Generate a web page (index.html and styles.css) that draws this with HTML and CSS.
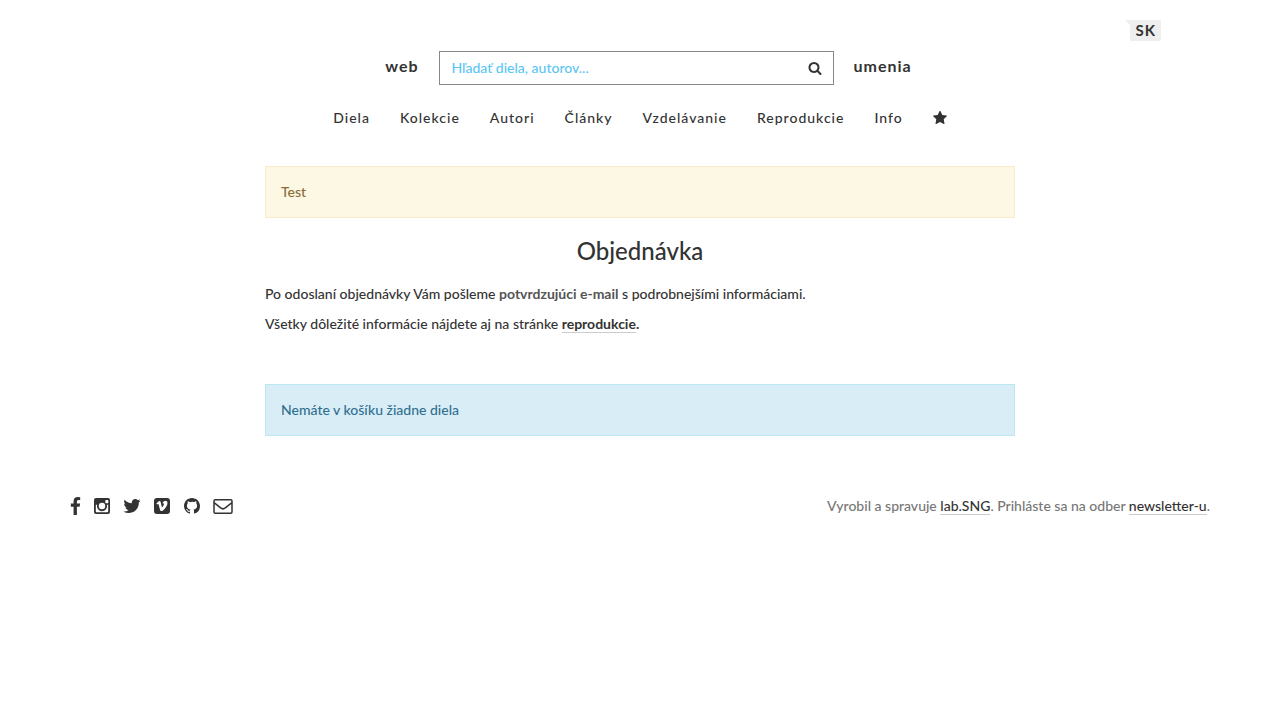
FILE: index.html
```html
<!DOCTYPE html>
<html lang="sk">
<head>
<meta charset="utf-8">
<meta name="viewport" content="width=device-width, initial-scale=1">
<title>Objednávka | web umenia</title>
<link rel="stylesheet" href="styles.css">
</head>
<body>
<header class="header">
  <div class="languages"><a class="lang" href="#">SK</a></div>
  <form class="search-row" role="search">
    <a class="brand brand-left" href="#">web</a>
    <div class="search">
      <input class="search-input" type="text" aria-label="Hľadať" placeholder="Hľadať diela, autorov...">
      <button class="search-button" type="button" aria-label="Hľadať">
        <svg class="search-icon" viewBox="0 0 1792 1792" aria-hidden="true"><path d="M1216 832q0-185-131.500-316.500t-316.500-131.500-316.500 131.500-131.500 316.500 131.500 316.500 316.500 131.500 316.500-131.500 131.500-316.500zm512 832q0 52-38 90t-90 38q-54 0-90-38l-343-342q-179 124-399 124-143 0-273.500-55.500t-225-150-150-225-55.500-273.500 55.500-273.500 150-225 225-150 273.500-55.500 273.500 55.500 225 150 150 225 55.500 273.500q0 220-124 399l343 343q37 37 37 90z"/></svg>
      </button>
    </div>
    <a class="brand" href="#">umenia</a>
  </form>
  <nav class="nav">
    <a href="#">Diela</a>
    <a href="#">Kolekcie</a>
    <a href="#">Autori</a>
    <a href="#">Články</a>
    <a href="#">Vzdelávanie</a>
    <a href="#">Reprodukcie</a>
    <a href="#">Info</a>
    <a class="nav-star" href="#" aria-label="Obľúbené"><svg class="star-icon" viewBox="64 64 1664 1664" aria-hidden="true"><path d="M1728 647q0 22-26 48l-363 354 86 500q1 7 1 20 0 21-10.500 35.500t-30.500 14.500q-19 0-40-12l-449-236-449 236q-22 12-40 12-21 0-31.500-14.500t-10.500-35.500q0-6 2-20l86-500-364-354q-25-27-25-48 0-37 56-46l502-73 225-455q19-41 49-41t49 41l225 455 502 73q56 9 56 46z"/></svg></a>
  </nav>
</header>
<main class="content">
  <div class="alert alert-warning">Test</div>
  <h1 class="title">Objednávka</h1>
  <p class="text">Po odoslaní objednávky Vám pošleme <strong class="muted">potvrdzujúci e-mail</strong> s podrobnejšími informáciami.</p>
  <p class="text">Všetky dôležité informácie nájdete aj na stránke <strong><a class="underline" href="#">reprodukcie</a>.</strong></p>
  <div class="alert alert-info">Nemáte v košíku žiadne diela</div>
</main>
<footer class="footer">
  <div class="social">
    <a href="#" aria-label="Facebook"><svg class="icon icon-narrow" viewBox="479 0 864 1664" aria-hidden="true"><path d="M1343 12v264h-157q-86 0-116 36t-30 108v189h293l-39 296h-254v759h-306v-759h-255v-296h255v-218q0-186 104-288.500t277-102.500q147 0 228 12z"/></svg></a>
    <a href="#" aria-label="Instagram"><svg class="icon" viewBox="0 0 18 18" aria-hidden="true"><path fill-rule="evenodd" d="M3 1H15Q17 1 17 3V15Q17 17 15 17H3Q1 17 1 15V3Q1 1 3 1ZM13 3Q12.300 3 12.300 3.700V5.500Q12.300 6.200 13 6.200H14.700Q15.400 6.200 15.400 5.500V3.700Q15.400 3 14.700 3ZM2.800 7.800V14.500Q2.800 15.200 3.500 15.200H14.500Q15.200 15.200 15.200 14.500V7.800H13.800A5 5 0 1 1 4.200 7.800ZM9 5.800A3.200 3.200 0 1 0 9 12.200A3.200 3.200 0 1 0 9 5.800Z"/></svg></a>
    <a href="#" aria-label="Twitter"><svg class="icon" viewBox="68 128 1656 1536" aria-hidden="true"><path d="M1684 408q-67 98-162 167 1 14 1 42 0 130-38 259.500t-115.500 248.500-184.500 210.500-258 146-323 54.500q-271 0-496-145 35 4 78 4 225 0 401-138-105-2-188-64.500t-114-159.500q33 5 61 5 43 0 85-11-112-23-185.500-111.500t-73.500-205.500v-4q68 38 146 41-66-44-105-115t-39-154q0-88 44-163 121 149 294.500 238.500t371.500 99.500q-8-38-8-74 0-134 94.500-228.500t228.500-94.500q140 0 236 102 109-21 205-78-37 115-142 178 93-10 186-50z"/></svg></a>
    <a href="#" aria-label="Vimeo"><svg class="icon" viewBox="0 0 18 18" aria-hidden="true"><path fill-rule="evenodd" d="M4 1H14Q17 1 17 4V14Q17 17 14 17H4Q1 17 1 14V4Q1 1 4 1ZM3.400 6.600L4 7.400Q5 6.700 5.300 7.100C6 8 6.500 11.300 7.100 12.900Q7.800 14.600 9.200 13.900Q11.100 12.900 12.900 10.200Q14.500 7.600 14.500 5.900Q14.500 3.700 12.500 3.700Q10.100 3.700 9.400 6.500Q11 6 10.900 7.200Q10.700 8.400 9.500 9.900Q8.900 10.500 8.600 9.300L7.800 5.400Q7.500 4 6.400 4Q5.400 4 3.400 6.600Z"/></svg></a>
    <a href="#" aria-label="GitHub"><svg class="icon" viewBox="-1 -1 18 18" aria-hidden="true"><path d="M8 0C3.580 0 0 3.580 0 8c0 3.540 2.290 6.530 5.470 7.590.4.070.55-.17.55-.38 0-.19-.01-.82-.01-1.490-2.010.37-2.530-.49-2.690-.94-.09-.23-.48-.94-.82-1.130-.28-.15-.68-.52-.01-.53.63-.01 1.080.58 1.230.82.72 1.210 1.870.87 2.330.66.07-.52.28-.87.51-1.070-1.780-.2-3.640-.89-3.640-3.950 0-.87.31-1.590.82-2.150-.08-.2-.36-1.020.08-2.120 0 0 .67-.21 2.200.82A7.600 7.600 0 0 1 8 3.860c.68 0 1.360.09 2 .27 1.530-1.040 2.200-.82 2.200-.82.44 1.100.16 1.920.08 2.120.51.56.82 1.270.82 2.150 0 3.070-1.870 3.750-3.650 3.950.29.25.54.73.54 1.480 0 1.070-.01 1.930-.01 2.200 0 .21.15.46.55.38A8 8 0 0 0 16 8c0-4.420-3.580-8-8-8z"/></svg></a>
    <a href="#" aria-label="E-mail"><svg class="icon icon-wide" viewBox="0 0 20 18" aria-hidden="true"><path fill="none" stroke="currentColor" stroke-width="1.500" stroke-linejoin="round" d="M2.200 2.700H17.800Q19 2.700 19 3.900V15.100Q19 16.300 17.800 16.300H2.200Q1 16.300 1 15.100V3.900Q1 2.700 2.200 2.700ZM1 5Q1.500 6 3 7.200L7.600 10.800Q10 12.900 12.400 10.800L17 7.200Q18.500 6 19 5"/></svg></a>
  </div>
  <p class="credits">Vyrobil a spravuje <a class="underline" href="#">lab.SNG</a>. Prihláste sa na odber <a class="underline" href="#">newsletter-u</a>.</p>
</footer>
</body>
</html>
```
FILE: styles.css
```css
* { box-sizing: border-box; }
body {
  margin: 0;
  background: #fff;
  color: #333;
  font: 500 14px/20px Lato, "Noto Sans", sans-serif;
}
a { color: #333; text-decoration: none; }
svg { display: block; fill: currentColor; }

.header { padding-top: 20px; }
.languages {
  display: flex;
  justify-content: flex-end;
  max-width: 1042px;
  margin: 0 auto;
}
.lang {
  position: relative;
  padding: 0 5px;
  border-radius: 0 2px 2px 0;
  background: #eee;
  font-size: 15px;
  font-weight: 700;
  line-height: 21px;
  letter-spacing: 1px;
}
.lang::before {
  content: "";
  position: absolute;
  top: 0;
  right: 100%;
  border-top: 5px solid #eee;
  border-left: 5px solid transparent;
}
.search-row {
  display: grid;
  grid-template-columns: 1fr 395px 1fr;
  gap: 20px;
  max-width: 1140px;
  margin: 10px auto 0;
  padding-right: 8px;
}
.brand {
  font-size: 16px;
  font-weight: 700;
  line-height: 30px;
  letter-spacing: 1px;
}
.brand-left { text-align: right; }
.search {
  display: flex;
  align-items: center;
  height: 34px;
  border: 1px solid #888;
}
.search-input {
  flex: 1;
  min-width: 0;
  padding: 0 12px;
  border: 0;
  outline: 0;
  background: none;
  color: #333;
  font: inherit;
}
.search-input::placeholder { color: #5bc6f2; opacity: 1; }
.search-button {
  padding: 0 11px;
  border: 0;
  background: none;
  color: #333;
}
.search-icon { width: 14px; height: 14px; }
.nav {
  display: flex;
  justify-content: center;
  gap: 30px;
  padding-top: 23px;
  letter-spacing: 1px;
}
.nav-star { padding-top: 3px; }
.star-icon { width: 14px; height: 14px; }

.content {
  max-width: 750px;
  margin: 38px auto 0;
}
.alert {
  padding: 15px;
  border: 1px solid;
}
.alert-warning {
  border-color: #faebcc;
  background: #fcf8e3;
  color: #8a6d3b;
}
.alert-info {
  margin-top: 50px;
  border-color: #bce8f1;
  background: #d9edf7;
  color: #31708f;
}
.title {
  margin: 20px 0;
  font-size: 24px;
  font-weight: 500;
  line-height: 26px;
  text-align: center;
}
.text { margin: 0 0 10px; }
.muted { color: #555; }
.underline { border-bottom: 1px solid #ccc; }

.footer {
  display: flex;
  justify-content: space-between;
  align-items: center;
  padding: 60px 70px 0;
}
.social {
  display: flex;
  align-items: center;
  gap: 12px;
}
.icon { width: 18px; height: 18px; }
.icon-narrow { width: 11px; }
.icon-wide { width: 20px; }
.credits { margin: 0; color: #777; }
```
